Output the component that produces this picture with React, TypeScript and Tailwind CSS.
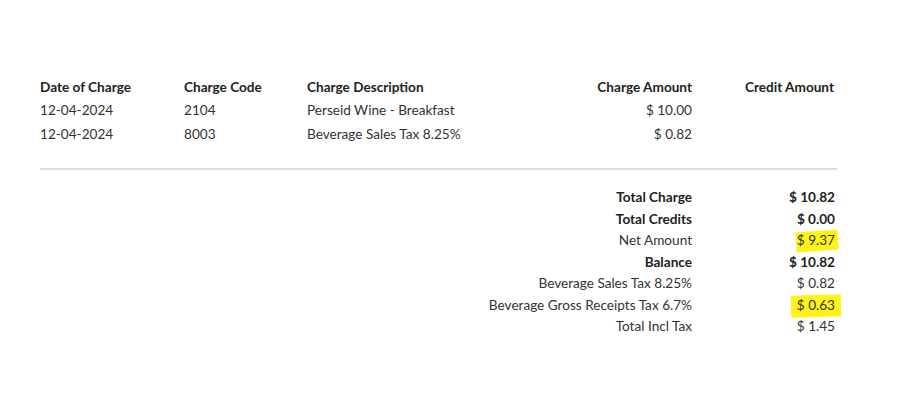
import type { ReactNode } from 'react';

interface Charge {
  date: string;
  code: string;
  description: string;
  amount: string;
  credit: string;
}

interface SummaryLine {
  label: string;
  value: string;
  bold?: boolean;
  mark?: 'tilted' | 'flat';
}

const charges: Charge[] = [
  { date: '12-04-2024', code: '2104', description: 'Perseid Wine - Breakfast', amount: '$ 10.00', credit: '' },
  { date: '12-04-2024', code: '8003', description: 'Beverage Sales Tax 8.25%', amount: '$ 0.82', credit: '' },
];

const summary: SummaryLine[] = [
  { label: 'Total Charge', value: '$ 10.82', bold: true },
  { label: 'Total Credits', value: '$ 0.00', bold: true },
  { label: 'Net Amount', value: '$ 9.37', mark: 'tilted' },
  { label: 'Balance', value: '$ 10.82', bold: true },
  { label: 'Beverage Sales Tax 8.25%', value: '$ 0.82' },
  { label: 'Beverage Gross Receipts Tax 6.7%', value: '$ 0.63', mark: 'flat' },
  { label: 'Total Incl Tax', value: '$ 1.45' },
];

const cols = 'grid grid-cols-[144px_123px_1fr_120px_145px]';

function Marker({ kind, children }: { kind: 'tilted' | 'flat'; children: ReactNode }) {
  return (
    <span className="relative inline-block isolate">
      <span
        className={
          kind === 'tilted'
            ? 'absolute -left-[1px] -right-[3px] top-[1px] bottom-[1px] -z-10 bg-[#fff21a] -rotate-[4deg]'
            : 'absolute -left-[6px] -right-[6px] top-[0px] bottom-[0px] -z-10 bg-[#fff21a] -rotate-[1.5deg]'
        }
      />
      {children}
    </span>
  );
}

export default function App() {
  return (
    <div className="min-h-[396px] w-[901px] bg-white text-[13.6px] text-[#333333] font-['Lato','Noto_Sans',sans-serif]">
      <div className="ml-[40px] w-[797px] pt-[77px]">
        <div className={`${cols} leading-[20px] font-bold text-[#222222]`}>
          <div>Date of Charge</div>
          <div>Charge Code</div>
          <div>Charge Description</div>
          <div className="text-right">Charge Amount</div>
          <div className="text-right pr-[3px]">Credit Amount</div>
        </div>
        <div className="mt-[3px] space-y-[4px]">
          {charges.map((row) => (
            <div key={row.code} className={`${cols} leading-[20px]`}>
              <div>{row.date}</div>
              <div>{row.code}</div>
              <div>{row.description}</div>
              <div className="text-right">{row.amount}</div>
              <div className="text-right pr-[2px]">{row.credit}</div>
            </div>
          ))}
        </div>

        <div className="mt-[24px] h-[2px] bg-[#dcdcdc]" />

        <div className="mt-[17px]">
          {summary.map((line) => (
            <div
              key={line.label}
              className={`${cols} leading-[21.5px] ${line.bold ? 'font-bold text-[#222222]' : ''}`}
            >
              <div className="col-span-4 text-right">{line.label}</div>
              <div className="text-right pr-[2px]">
                {line.mark ? <Marker kind={line.mark}>{line.value}</Marker> : line.value}
              </div>
            </div>
          ))}
        </div>
      </div>
    </div>
  );
}
